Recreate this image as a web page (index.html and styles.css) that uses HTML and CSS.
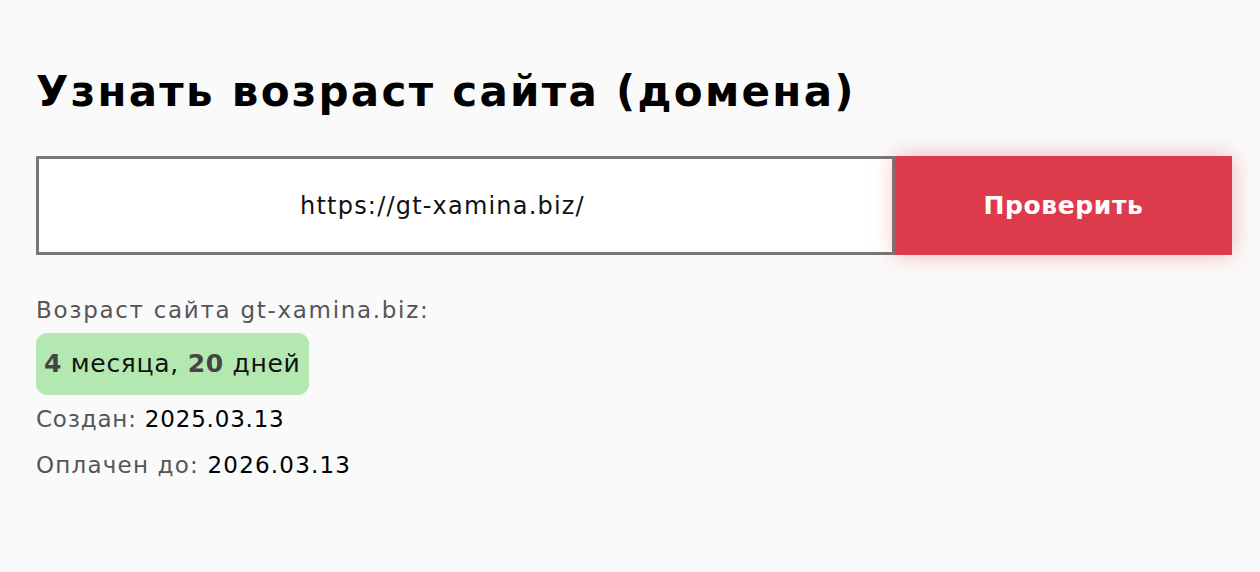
FILE: index.html
```html
<!DOCTYPE html>
<html lang="ru">
<head>
<meta charset="utf-8">
<title>Узнать возраст сайта (домена)</title>
<link rel="stylesheet" href="styles.css">
</head>
<body>
<main class="page">
  <h1 class="title">Узнать возраст сайта (домена)</h1>
  <form class="check-form">
    <div class="url-field">https://gt-xamina.biz/</div>
    <button type="button" class="check-btn">Проверить</button>
  </form>
  <section class="result">
    <div class="result-label">Возраст сайта gt-xamina.biz:</div>
    <div class="age-badge"><b>4</b> месяца, <b>20</b> дней</div>
    <div class="result-row result-row--created">Создан: <span class="val">2025.03.13</span></div>
    <div class="result-row result-row--paid">Оплачен до: <span class="val">2026.03.13</span></div>
  </section>
</main>
</body>
</html>
```

FILE: styles.css
```css
html, body {
  margin: 0;
  padding: 0;
  background: #fafafa;
}
body {
  font-family: "DejaVu Sans", "Noto Sans", sans-serif;
  color: #000;
}
.page {
  padding: 62px 28px 0 36px;
}
.title {
  margin: 0;
  font-size: 42px;
  font-weight: 700;
  line-height: 60px;
  letter-spacing: 2.3px;
}
.check-form {
  display: flex;
  margin-top: 34px;
  height: 99px;
}
.url-field {
  flex: 1;
  box-sizing: border-box;
  border: 3px solid #777;
  background: #fff;
  display: flex;
  align-items: center;
  justify-content: center;
  padding-right: 46px;
  font-size: 24px;
  letter-spacing: 1.2px;
  color: #111;
}
.check-btn {
  width: 337px;
  border: none;
  background: #dd3b4c;
  color: #fff;
  font-family: inherit;
  font-size: 25px;
  font-weight: 700;
  letter-spacing: 0.6px;
  box-shadow: 0 0 22px rgba(230, 60, 75, 0.35);
}
.result {
  margin-top: 40px;
  font-size: 23px;
}
.result-label {
  color: #555;
  line-height: 30px;
  letter-spacing: 1.7px;
}
.age-badge {
  display: inline-block;
  margin-top: 8px;
  background: #b3e9b1;
  border-radius: 11px;
  padding: 0 8px;
  height: 62px;
  line-height: 62px;
  font-size: 25px;
  letter-spacing: 0.7px;
  color: #111;
}
.age-badge b {
  color: #444;
}
.result-row {
  color: #555;
  line-height: 46px;
}
.result-row--created {
  margin-top: 1px;
  letter-spacing: 0.8px;
}
.result-row--paid {
  letter-spacing: 1.2px;
}
.result-row .val {
  color: #000;
}
```
